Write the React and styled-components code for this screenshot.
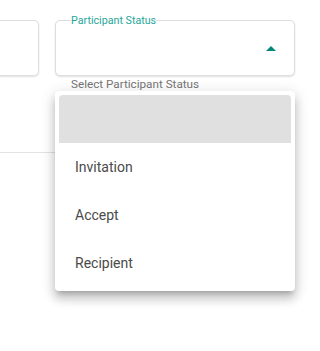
import React from "react";
import styled, { createGlobalStyle } from "styled-components";

const Global = createGlobalStyle`
  html, body { margin: 0; padding: 0; background: #fff; }
  body { font-family: Roboto, "Noto Sans", sans-serif; }
`;

const Page = styled.div`
  width: 313px;
  height: 351px;
  padding-top: 20px;
  box-sizing: border-box;
  overflow: hidden;
  position: relative;
`;

const Row = styled.div`
  display: flex;
  gap: 16px;
  align-items: flex-start;
`;

const Box = styled.div`
  box-sizing: border-box;
  height: 56px;
  background: #fff;
  border: 1px solid #dedede;
  border-radius: 5px;
  box-shadow: 0 1px 2px rgba(0, 0, 0, 0.12);
`;

const StubBox = styled(Box)`
  width: 39px;
  border-left: none;
  border-top-left-radius: 0;
  border-bottom-left-radius: 0;
`;

const Field = styled.div`
  position: relative;
  width: 240px;
`;

const SelectBox = styled(Box)`
  position: relative;
  display: flex;
  align-items: center;
  justify-content: flex-end;
  padding-right: 18px;
`;

const Legend = styled.span`
  position: absolute;
  top: -7px;
  left: 15px;
  background: #fff;
  color: #26a69a;
  font-size: 10.7px;
  line-height: 13px;
`;

const Arrow = styled.svg`
  width: 10px;
  height: 5px;
  display: block;
  margin-top: 1px;
`;

const Helper = styled.div`
  margin-left: 16px;
  font-size: 11.7px;
  line-height: 16px;
  color: #757575;
`;

const Divider = styled.div`
  margin-top: 60px;
  width: 200px;
  height: 1px;
  background: #e3e3e3;
`;

const Menu = styled.ul`
  position: absolute;
  left: 0;
  top: 71px;
  width: 240px;
  margin: 0;
  padding: 4px 0;
  list-style: none;
  box-sizing: border-box;
  background: #fff;
  border-radius: 4px;
  box-shadow: 0 5px 5px -3px rgba(0, 0, 0, 0.2), 0 8px 10px 1px rgba(0, 0, 0, 0.14),
    0 3px 14px 2px rgba(0, 0, 0, 0.12);
`;

const Item = styled.li`
  height: 48px;
  margin: 0 4px;
  padding-left: 16px;
  display: flex;
  align-items: center;
  font-size: 14px;
  color: #4a4a4a;
  background: ${(p) => (p.$active ? "#e0e0e0" : "transparent")};
  border-radius: ${(p) => (p.$active ? "4px 4px 0 0" : "0")};
`;

const options = ["", "Invitation", "Accept", "Recipient"];

export default function App() {
  return (
    <>
      <Global />
      <Page>
        <Row>
          <StubBox />
          <Field>
            <SelectBox>
              <Legend>Participant Status</Legend>
              <Arrow viewBox="0 0 10 5">
                <path d="M0 5 L5 0 L10 5 Z" fill="#00897b" />
              </Arrow>
            </SelectBox>
            <Helper>Select Participant Status</Helper>
            <Menu>
              {options.map((o, i) => (
                <Item key={i} $active={i === 0}>
                  {o}
                </Item>
              ))}
            </Menu>
          </Field>
        </Row>
        <Divider />
      </Page>
    </>
  );
}
